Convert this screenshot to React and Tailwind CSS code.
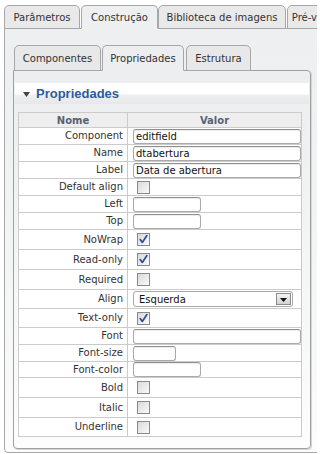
import React from "react";

const font = { fontFamily: '"DejaVu Sans", Verdana, sans-serif' };

function OuterTab({ label, active, w }) {
  return (
    <div
      className={
        "h-[24px] -mb-px flex items-center justify-center rounded-t-[5px] border border-[#a7a7a7] text-[10px] text-[#333] shrink-0 " +
        (active
          ? "relative z-10 border-b-[#edeff0] bg-[#edeff0]"
          : "bg-[#e9e9e9]")
      }
      style={{ width: w }}
    >
      {label}
    </div>
  );
}

function InnerTab({ label, active, w }) {
  return (
    <div
      className={
        "h-[26px] -mb-px flex items-center justify-center rounded-t-[5px] border border-[#a7a7a7] text-[10px] text-[#333] shrink-0 " +
        (active
          ? "relative z-10 border-b-[#eceeef] bg-[#eceeef]"
          : "bg-[#e8e8e8]")
      }
      style={{ width: w }}
    >
      {label}
    </div>
  );
}

function Check({ checked }) {
  return (
    <div className="w-[13px] h-[13px] border border-[#8a8a8a] bg-linear-to-br from-[#d9d9d9] to-[#fbfbfb] flex items-center justify-center">
      {checked && (
        <svg width="11" height="11" viewBox="0 0 11 11">
          <path
            d="M2.2 5.6 L4.3 8.4 L8.9 1.6"
            fill="none"
            stroke="#2c4a9a"
            strokeWidth="1.7"
            strokeLinecap="round"
            strokeLinejoin="round"
          />
        </svg>
      )}
    </div>
  );
}

function TextInput({ value, w }) {
  return (
    <div
      className="h-[15px] rounded-[3px] border border-[#a9a9a9] border-t-[#8f8f8f] bg-white text-[10px] leading-[13px] text-[#111] pl-[2px] shadow-[inset_0_1px_1px_rgba(0,0,0,0.08)]"
      style={{ width: w }}
    >
      {value}
    </div>
  );
}

function Select({ value }) {
  return (
    <div className="h-[16px] w-[160px] rounded-[3px] border border-[#a9a9a9] bg-white flex items-center text-[10px] text-[#111] pl-[5px] relative">
      <span>{value}</span>
      <div className="absolute right-[1px] top-[1px] w-[15px] h-[12px] border border-[#8c8c8c] bg-linear-to-b from-[#f4f4f4] to-[#d2d2d2] flex items-end justify-center pb-[2px]">
        <svg width="7" height="4" viewBox="0 0 7 4">
          <path d="M0 0 H7 L3.5 4 Z" fill="#111" />
        </svg>
      </div>
    </div>
  );
}

const rows = [
  { n: "Component", t: "text", v: "editfield", w: 168, h: 17 },
  { n: "Name", t: "text", v: "dtabertura", w: 168, h: 17 },
  { n: "Label", t: "text", v: "Data de abertura", w: 168, h: 17 },
  { n: "Default align", t: "check", v: false, h: 17 },
  { n: "Left", t: "text", v: "", w: 68, h: 17 },
  { n: "Top", t: "text", v: "", w: 68, h: 17 },
  { n: "NoWrap", t: "check", v: true, h: 20 },
  { n: "Read-only", t: "check", v: true, h: 20 },
  { n: "Required", t: "check", v: false, h: 20 },
  { n: "Align", t: "select", v: "Esquerda", h: 19 },
  { n: "Text-only", t: "check", v: true, h: 19 },
  { n: "Font", t: "text", v: "", w: 168, h: 17 },
  { n: "Font-size", t: "text", v: "", w: 43, h: 17 },
  { n: "Font-color", t: "text", v: "", w: 68, h: 16 },
  { n: "Bold", t: "check", v: false, h: 20 },
  { n: "Italic", t: "check", v: false, h: 20 },
  { n: "Underline", t: "check", v: false, h: 19 },
];

export default function App() {
  return (
    <div
      className="w-[317px] h-[454px] overflow-hidden bg-white relative"
      style={font}
    >
      {/* outer tabs */}
      <div className="flex items-end pt-[4px] pl-[4px] h-[28px]">
        <OuterTab label="Parâmetros" w={76} />
        <div className="w-[1px] shrink-0" />
        <OuterTab label="Construção" w={77} active />
        <OuterTab label="Biblioteca de imagens" w={128} />
        <div className="w-[1px] shrink-0" />
        <OuterTab label="Pré-visualização" w={90} />
      </div>

      {/* outer panel */}
      <div className="ml-[4px] w-[330px] h-[425px] border border-[#a7a7a7] rounded-b-[4px] bg-linear-to-b from-[#edeff0] via-[#f3f4f4] to-[#fcfcfc] pt-[16px] pl-[8px]">
        {/* inner tabs */}
        <div className="flex items-end pl-[1px] h-[25px]">
          <InnerTab label="Componentes" w={87} />
          <div className="w-[1px] shrink-0" />
          <InnerTab label="Propriedades" w={82} active />
          <div className="w-[2px] shrink-0" />
          <InnerTab label="Estrutura" w={65} />
        </div>

        {/* inner panel */}
        <div className="w-[298px] h-[379px] border border-[#a0a0a0] rounded-tr-[4px] rounded-b-[4px] bg-linear-to-b from-[#eceeef] via-[#f4f5f5] to-[#fdfdfd] pt-[12px] shadow-[1px_1px_0_#d6d6d6]">
          {/* header band */}
          <div className="mx-[1px] h-[21px] bg-[linear-gradient(#ffffff_0%,#ffffff_52%,#eeeeee_58%,#e8e8e8_100%)] flex items-center pl-[8px]">
            <svg width="7" height="5" viewBox="0 0 7 5" className="mr-[6px] mt-[1px]">
              <path d="M0 0 H7 L3.5 5 Z" fill="#444" />
            </svg>
            <span
              className="text-[13px] font-bold text-[#2c5c9a] leading-none"
              style={{ fontFamily: '"Liberation Sans", Arial, sans-serif' }}
            >
              Propriedades
            </span>
          </div>

          {/* table */}
          <div className="pl-[4px] pt-[8px]">
            <table className="border-collapse w-[284px] text-[10px] bg-white">
              <thead>
                <tr className="h-[15px] bg-[#eeeeee]">
                  <th className="border border-[#cbcbcb] w-[109px] p-0 text-center font-bold text-[#566274] leading-[13px]">
                    Nome
                  </th>
                  <th className="border border-[#cbcbcb] p-0 text-center font-bold text-[#566274] leading-[13px]">
                    Valor
                  </th>
                </tr>
              </thead>
              <tbody>
                {rows.map((r) => (
                  <tr key={r.n} style={{ height: r.h }}>
                    <td className="border border-[#cbcbcb] p-0 pr-[4px] text-right text-[#333] leading-[12px]">
                      {r.n}
                    </td>
                    <td className="border border-[#cbcbcb] p-0 pl-[5px]">
                      {r.t === "text" && <TextInput value={r.v} w={r.w} />}
                      {r.t === "check" && (
                        <div className="pl-[4px]">
                          <Check checked={r.v} />
                        </div>
                      )}
                      {r.t === "select" && <Select value={r.v} />}
                    </td>
                  </tr>
                ))}
              </tbody>
            </table>
          </div>
        </div>
      </div>
    </div>
  );
}
